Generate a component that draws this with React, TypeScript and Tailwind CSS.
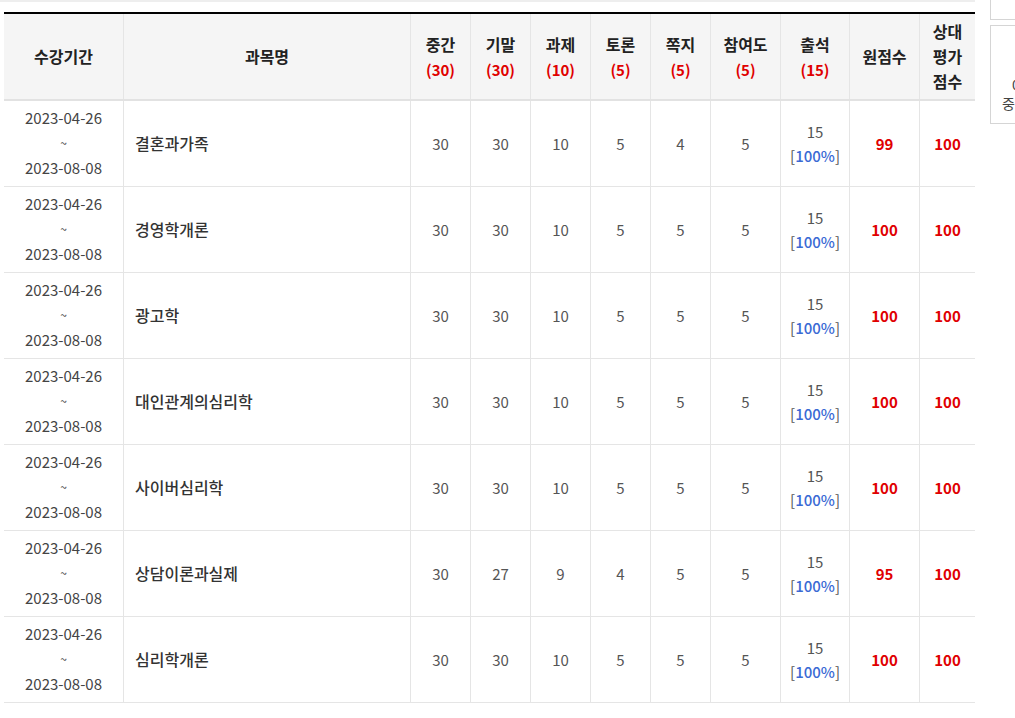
const font = { fontFamily: '"Noto Sans CJK KR", "Noto Sans", sans-serif' };

type Row = {
  name: string;
  mid: number;
  fin: number;
  task: number;
  talk: number;
  quiz: number;
  part: number;
  att: number;
  raw: number;
  rel: number;
};

const rows: Row[] = [
  { name: "결혼과가족", mid: 30, fin: 30, task: 10, talk: 5, quiz: 4, part: 5, att: 15, raw: 99, rel: 100 },
  { name: "경영학개론", mid: 30, fin: 30, task: 10, talk: 5, quiz: 5, part: 5, att: 15, raw: 100, rel: 100 },
  { name: "광고학", mid: 30, fin: 30, task: 10, talk: 5, quiz: 5, part: 5, att: 15, raw: 100, rel: 100 },
  { name: "대인관계의심리학", mid: 30, fin: 30, task: 10, talk: 5, quiz: 5, part: 5, att: 15, raw: 100, rel: 100 },
  { name: "사이버심리학", mid: 30, fin: 30, task: 10, talk: 5, quiz: 5, part: 5, att: 15, raw: 100, rel: 100 },
  { name: "상담이론과실제", mid: 30, fin: 27, task: 9, talk: 4, quiz: 5, part: 5, att: 15, raw: 95, rel: 100 },
  { name: "심리학개론", mid: 30, fin: 30, task: 10, talk: 5, quiz: 5, part: 5, att: 15, raw: 100, rel: 100 },
];

const gridCols =
  "grid grid-cols-[120px_287px_60px_60px_60px_60px_60px_70px_69px_70px_55px]";
const cell = "flex flex-col items-center justify-center border-r border-[#e5e5e5]";

function HeadCell({ label, max, last }: { label: string; max?: string; last?: boolean }) {
  return (
    <div className={last ? "flex flex-col items-center justify-center" : cell}>
      <span className="text-[16px]">{label}</span>
      {max && <span className="text-[#e00000]">({max})</span>}
    </div>
  );
}

export default function App() {
  return (
    <div className="flex h-[718px] w-[1015px] overflow-hidden bg-white text-[15px]" style={font}>
      <div className="w-[975px] shrink-0">
        <div className="h-[2px] bg-[#eeeeee]" />
        <div className="ml-[4px] mt-[10px] w-[971px]">
          <div
            className={`${gridCols} h-[89px] border-t-2 border-b-2 border-t-black border-b-[#e2e2e2] bg-[#f5f5f5] font-bold leading-[25px] text-[#222]`}
          >
            <HeadCell label="수강기간" />
            <HeadCell label="과목명" />
            <HeadCell label="중간" max="30" />
            <HeadCell label="기말" max="30" />
            <HeadCell label="과제" max="10" />
            <HeadCell label="토론" max="5" />
            <HeadCell label="쪽지" max="5" />
            <HeadCell label="참여도" max="5" />
            <HeadCell label="출석" max="15" />
            <HeadCell label="원점수" />
            <div className="flex flex-col items-center justify-center text-[16px]">
              <span>상대</span>
              <span>평가</span>
              <span>점수</span>
            </div>
          </div>

          {rows.map((r) => (
            <div
              key={r.name}
              className={`${gridCols} h-[86px] border-b border-[#e5e5e5] leading-[25px] text-[#555]`}
            >
              <div className={`${cell} pb-[2px] text-[#444]`}>
                <span>2023-04-26</span>
                <span className="text-[12px]">~</span>
                <span>2023-08-08</span>
              </div>
              <div className="flex items-center border-r border-[#e5e5e5] pb-[1px] pl-[11px] text-[16px] font-medium text-[#333]">
                {r.name}
              </div>
              <div className={cell}>{r.mid}</div>
              <div className={cell}>{r.fin}</div>
              <div className={cell}>{r.task}</div>
              <div className={cell}>{r.talk}</div>
              <div className={cell}>{r.quiz}</div>
              <div className={cell}>{r.part}</div>
              <div className={`${cell} leading-[24px]`}>
                <span>{r.att}</span>
                <span>
                  [<span className="font-medium text-[#3a6ad4]">100%</span>]
                </span>
              </div>
              <div className={`${cell} font-bold text-[#e00000]`}>{r.raw}</div>
              <div className="flex items-center justify-center font-bold text-[#e00000]">{r.rel}</div>
            </div>
          ))}
        </div>
      </div>

      <div className="ml-[15px] flex shrink-0 flex-col text-[14px] text-[#444]">
        <div className="-mt-[20px] h-[40px] w-[60px] border border-[#d5d5d5] bg-white pl-[20px] pt-[8px] leading-[20px]">
          ↑
        </div>
        <div className="mt-[5px] flex h-[99px] w-[60px] flex-col justify-end border border-[#d5d5d5] bg-white pb-[10px] pl-[11px] leading-[19px]">
          <span className="pl-[10px]">0</span>
          <span>중간</span>
        </div>
      </div>
    </div>
  );
}
